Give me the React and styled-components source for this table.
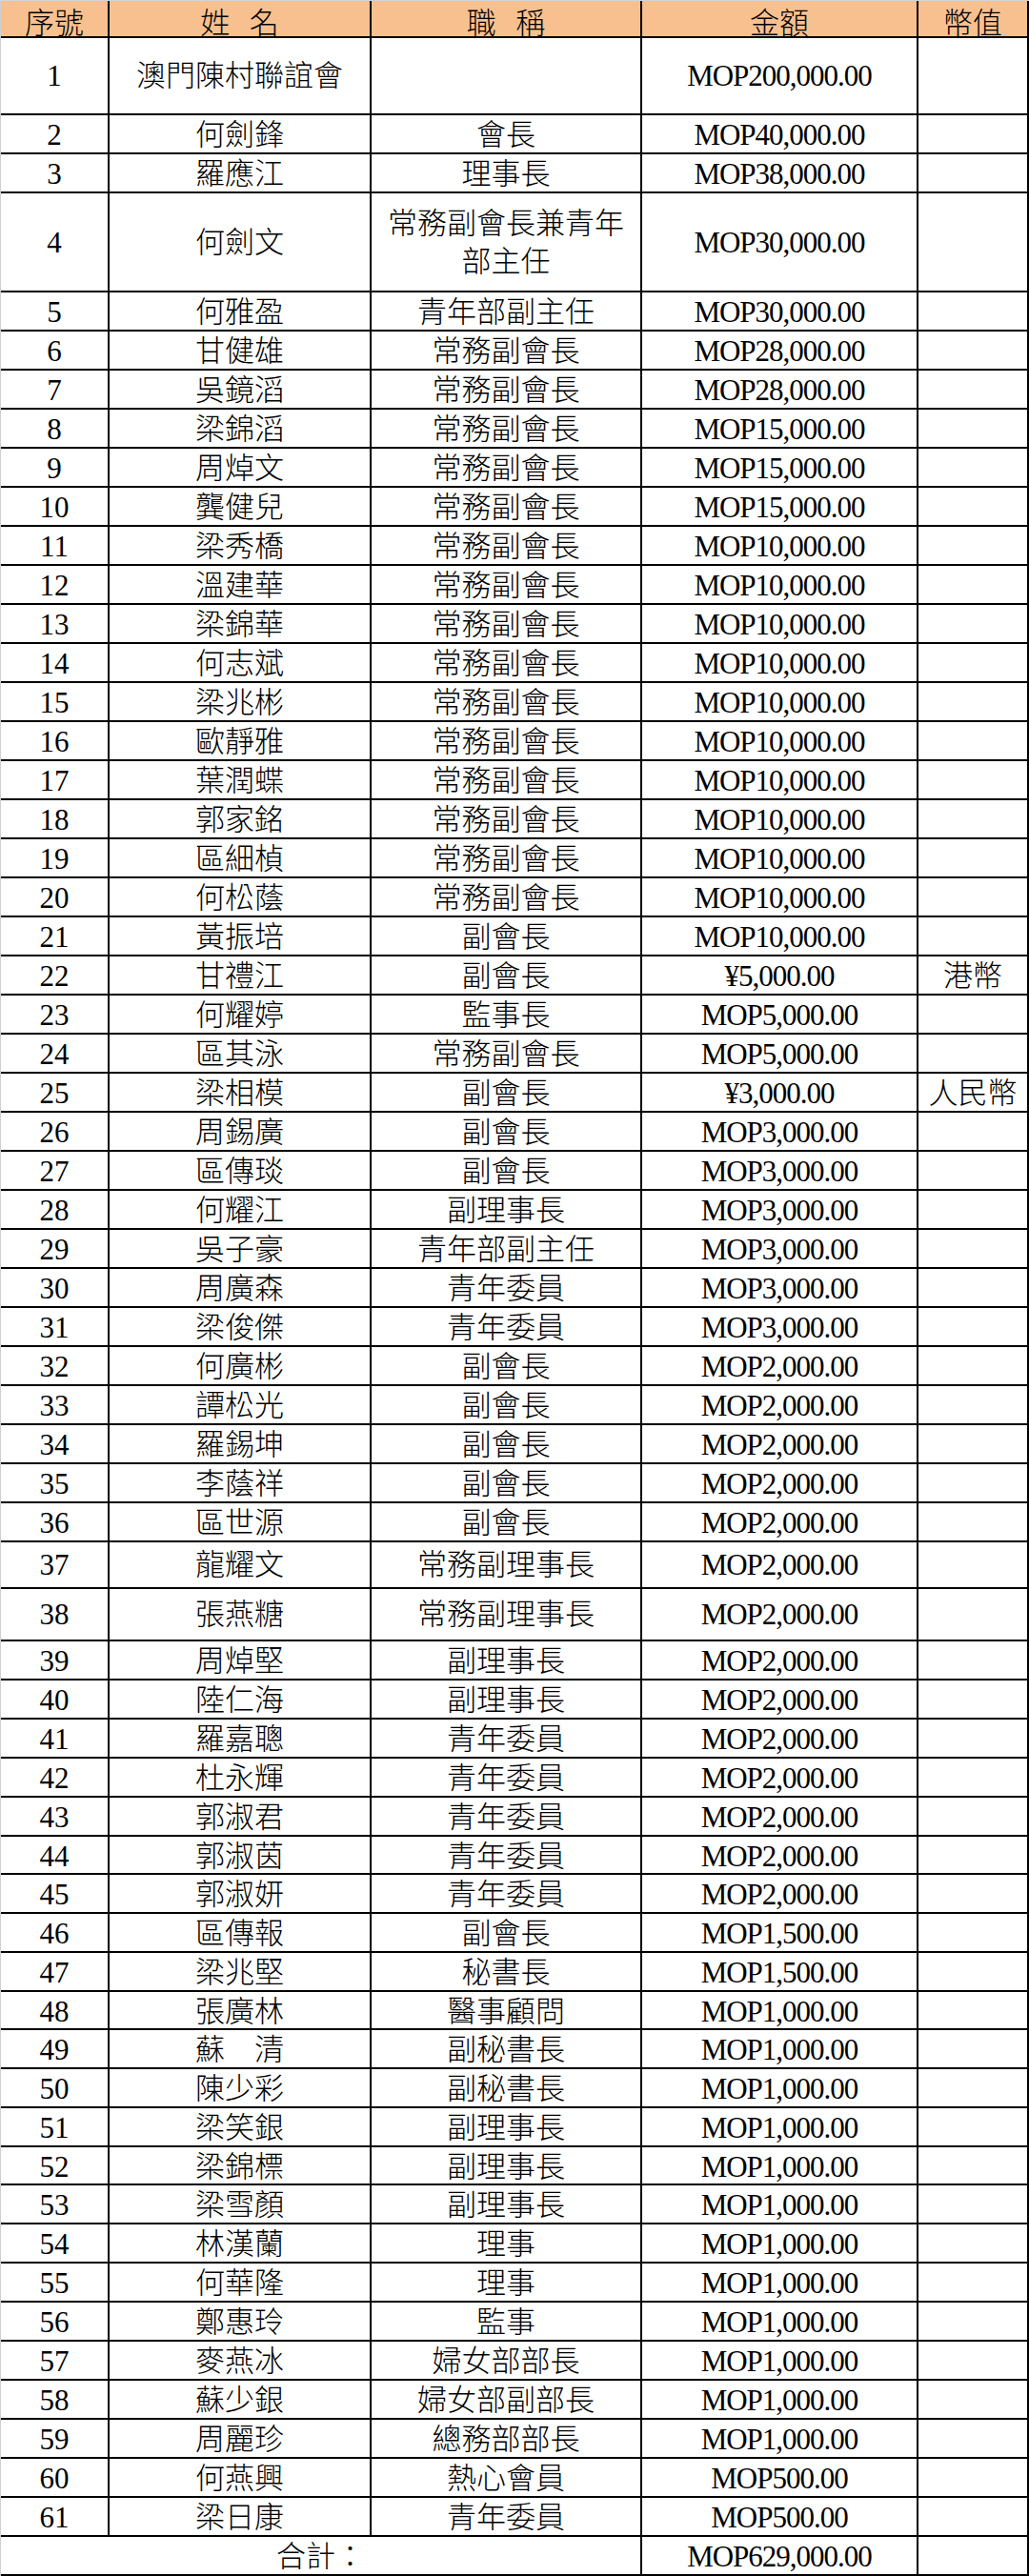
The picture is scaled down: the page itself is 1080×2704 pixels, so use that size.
import React from 'react'
import styled, { createGlobalStyle } from 'styled-components'

const GlobalStyle = createGlobalStyle`
    html, body {
        margin: 0;
        padding: 0;
        background: #fff;
    }
`

// [no, name, title, amount, currency, rowHeight]
const donors = [
    [1, '澳門陳村聯誼會', '', 'MOP200,000.00', '', 81],
    [2, '何劍鋒', '會長', 'MOP40,000.00'],
    [3, '羅應江', '理事長', 'MOP38,000.00'],
    [4, '何劍文', '常務副會長兼青年\n部主任', 'MOP30,000.00', '', 104],
    [5, '何雅盈', '青年部副主任', 'MOP30,000.00'],
    [6, '甘健雄', '常務副會長', 'MOP28,000.00'],
    [7, '吳鏡滔', '常務副會長', 'MOP28,000.00'],
    [8, '梁錦滔', '常務副會長', 'MOP15,000.00'],
    [9, '周焯文', '常務副會長', 'MOP15,000.00'],
    [10, '龔健兒', '常務副會長', 'MOP15,000.00'],
    [11, '梁秀橋', '常務副會長', 'MOP10,000.00'],
    [12, '溫建華', '常務副會長', 'MOP10,000.00'],
    [13, '梁錦華', '常務副會長', 'MOP10,000.00'],
    [14, '何志斌', '常務副會長', 'MOP10,000.00'],
    [15, '梁兆彬', '常務副會長', 'MOP10,000.00'],
    [16, '歐靜雅', '常務副會長', 'MOP10,000.00'],
    [17, '葉潤蝶', '常務副會長', 'MOP10,000.00'],
    [18, '郭家銘', '常務副會長', 'MOP10,000.00'],
    [19, '區細楨', '常務副會長', 'MOP10,000.00'],
    [20, '何松蔭', '常務副會長', 'MOP10,000.00'],
    [21, '黃振培', '副會長', 'MOP10,000.00'],
    [22, '甘禮江', '副會長', '¥5,000.00', '港幣'],
    [23, '何耀婷', '監事長', 'MOP5,000.00'],
    [24, '區其泳', '常務副會長', 'MOP5,000.00'],
    [25, '梁相模', '副會長', '¥3,000.00', '人民幣'],
    [26, '周錫廣', '副會長', 'MOP3,000.00'],
    [27, '區傳琰', '副會長', 'MOP3,000.00'],
    [28, '何耀江', '副理事長', 'MOP3,000.00'],
    [29, '吳子豪', '青年部副主任', 'MOP3,000.00'],
    [30, '周廣森', '青年委員', 'MOP3,000.00'],
    [31, '梁俊傑', '青年委員', 'MOP3,000.00'],
    [32, '何廣彬', '副會長', 'MOP2,000.00'],
    [33, '譚松光', '副會長', 'MOP2,000.00'],
    [34, '羅錫坤', '副會長', 'MOP2,000.00'],
    [35, '李蔭祥', '副會長', 'MOP2,000.00'],
    [36, '區世源', '副會長', 'MOP2,000.00'],
    [37, '龍耀文', '常務副理事長', 'MOP2,000.00', '', 49],
    [38, '張燕糖', '常務副理事長', 'MOP2,000.00', '', 55],
    [39, '周焯堅', '副理事長', 'MOP2,000.00'],
    [40, '陸仁海', '副理事長', 'MOP2,000.00'],
    [41, '羅嘉聰', '青年委員', 'MOP2,000.00'],
    [42, '杜永輝', '青年委員', 'MOP2,000.00'],
    [43, '郭淑君', '青年委員', 'MOP2,000.00'],
    [44, '郭淑茵', '青年委員', 'MOP2,000.00', '', 40],
    [45, '郭淑妍', '青年委員', 'MOP2,000.00'],
    [46, '區傳報', '副會長', 'MOP1,500.00'],
    [47, '梁兆堅', '秘書長', 'MOP1,500.00'],
    [48, '張廣林', '醫事顧問', 'MOP1,000.00', '', 40],
    [49, '蘇　清', '副秘書長', 'MOP1,000.00'],
    [50, '陳少彩', '副秘書長', 'MOP1,000.00'],
    [51, '梁笑銀', '副理事長', 'MOP1,000.00'],
    [52, '梁錦標', '副理事長', 'MOP1,000.00', '', 40],
    [53, '梁雪顏', '副理事長', 'MOP1,000.00'],
    [54, '林漢蘭', '理事', 'MOP1,000.00'],
    [55, '何華隆', '理事', 'MOP1,000.00'],
    [56, '鄭惠玲', '監事', 'MOP1,000.00'],
    [57, '麥燕冰', '婦女部部長', 'MOP1,000.00'],
    [58, '蘇少銀', '婦女部副部長', 'MOP1,000.00'],
    [59, '周麗珍', '總務部部長', 'MOP1,000.00'],
    [60, '何燕興', '熱心會員', 'MOP500.00'],
    [61, '梁日康', '青年委員', 'MOP500.00'],
]

const Sheet = styled.div`
    width: 1080px;
    box-sizing: border-box;
    border-top: 1px solid #d4d4d4;
    border-left: 1px solid #cfcfcf;
    font-family: "Liberation Serif", "Noto Sans CJK TC", serif;
    font-size: 31px;
    color: #000;
`

const Row = styled.div`
    display: grid;
    grid-template-columns: 114px 275px 284px 290px 116px;
    box-sizing: border-box;
    height: ${props => props.$h}px;
    border-bottom: 2px solid #000;
    background: ${props => props.$head ? '#f9c08f' : '#fff'};
`

const Cell = styled.div`
    display: flex;
    align-items: ${props => props.$bottom ? 'flex-end' : 'center'};
    justify-content: center;
    box-sizing: border-box;
    border-right: 2px solid #000;
    grid-column: span ${props => props.$span || 1};
    padding-top: ${props => props.$head ? '4px' : '1px'};
    padding-bottom: ${props => props.$bottom ? '1px' : '0'};
    text-align: center;
    line-height: 40px;
    white-space: pre-line;
    font-weight: 300;
`

const Amount = styled(Cell)`
    letter-spacing: -1px;
`

const HeadText = styled.span`
    word-spacing: 13px;
`

const App = () => {
    const rows = donors.map(([no, name, title, amount, currency, h]) =>
        <Row key={no} $h={h || 41}>
            <Cell>{no}</Cell>
            <Cell>{name}</Cell>
            <Cell>{title}</Cell>
            <Amount>{amount}</Amount>
            <Cell>{currency}</Cell>
        </Row>
    )

    return (
        <>
            <GlobalStyle />
            <Sheet>
                <Row $head $h={39}>
                    <Cell $head>序號</Cell>
                    <Cell $head><HeadText>姓 名</HeadText></Cell>
                    <Cell $head><HeadText>職 稱</HeadText></Cell>
                    <Cell $head>金額</Cell>
                    <Cell $head>幣值</Cell>
                </Row>
                { rows }
                <Row $h={41}>
                    <Cell $span={3} $bottom>合計：</Cell>
                    <Amount $bottom>MOP629,000.00</Amount>
                    <Cell $bottom></Cell>
                </Row>
            </Sheet>
        </>
    )
}

export default App
